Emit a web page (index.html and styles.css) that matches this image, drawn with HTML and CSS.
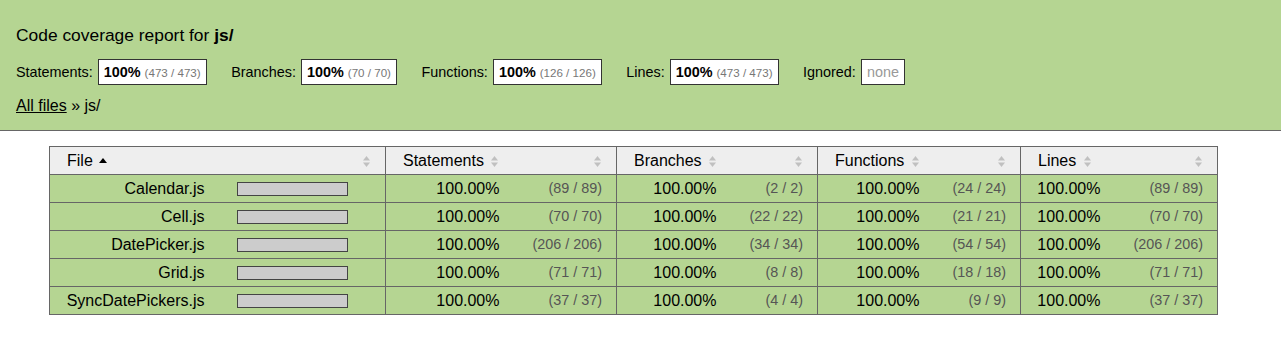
FILE: index.html
```html
<!DOCTYPE html>
<html>
<head>
<meta charset="utf-8">
<title>Code coverage report for js/</title>
<link rel="stylesheet" href="styles.css">
</head>
<body>
<div class="header high">
  <h1 class="title">Code coverage report for <span class="strong">js/</span></h1>
  <div class="stats">
    <div class="stat"><span class="label">Statements:</span><span class="box"><span class="strong">100%</span> <span class="frac">(473 / 473)</span></span></div>
    <div class="stat"><span class="label">Branches:</span><span class="box"><span class="strong">100%</span> <span class="frac">(70 / 70)</span></span></div>
    <div class="stat"><span class="label">Functions:</span><span class="box"><span class="strong">100%</span> <span class="frac">(126 / 126)</span></span></div>
    <div class="stat"><span class="label">Lines:</span><span class="box"><span class="strong">100%</span> <span class="frac">(473 / 473)</span></span></div>
    <div class="stat"><span class="label">Ignored:</span><span class="box"><span class="none">none</span></span></div>
  </div>
  <div class="path"><a href="#">All files</a> » js/</div>
</div>

<div class="body">
<table class="summary">
  <colgroup>
    <col class="c-name"><col class="c-bar">
    <col class="c-spct"><col class="c-sabs">
    <col class="c-bpct"><col class="c-babs">
    <col class="c-fpct"><col class="c-fabs">
    <col class="c-lpct"><col class="c-labs">
  </colgroup>
  <thead>
    <tr>
      <th class="th-lab g-start">File <svg class="asc" width="8" height="5" viewBox="0 0 8 5"><polygon points="0,5 8,5 4,0" fill="#000"/></svg></th>
      <th class="th-sort"><svg class="sorter" width="7" height="11" viewBox="0 0 7 11"><polygon points="0,4.5 7,4.5 3.5,0" fill="#c0c0c0"/><polygon points="0,6.5 7,6.5 3.5,11" fill="#c0c0c0"/></svg></th>
      <th class="th-lab g-start">Statements <svg class="sorter" width="7" height="11" viewBox="0 0 7 11"><polygon points="0,4.5 7,4.5 3.5,0" fill="#c0c0c0"/><polygon points="0,6.5 7,6.5 3.5,11" fill="#c0c0c0"/></svg></th>
      <th class="th-sort"><svg class="sorter" width="7" height="11" viewBox="0 0 7 11"><polygon points="0,4.5 7,4.5 3.5,0" fill="#c0c0c0"/><polygon points="0,6.5 7,6.5 3.5,11" fill="#c0c0c0"/></svg></th>
      <th class="th-lab g-start">Branches <svg class="sorter" width="7" height="11" viewBox="0 0 7 11"><polygon points="0,4.5 7,4.5 3.5,0" fill="#c0c0c0"/><polygon points="0,6.5 7,6.5 3.5,11" fill="#c0c0c0"/></svg></th>
      <th class="th-sort"><svg class="sorter" width="7" height="11" viewBox="0 0 7 11"><polygon points="0,4.5 7,4.5 3.5,0" fill="#c0c0c0"/><polygon points="0,6.5 7,6.5 3.5,11" fill="#c0c0c0"/></svg></th>
      <th class="th-lab g-start">Functions <svg class="sorter" width="7" height="11" viewBox="0 0 7 11"><polygon points="0,4.5 7,4.5 3.5,0" fill="#c0c0c0"/><polygon points="0,6.5 7,6.5 3.5,11" fill="#c0c0c0"/></svg></th>
      <th class="th-sort"><svg class="sorter" width="7" height="11" viewBox="0 0 7 11"><polygon points="0,4.5 7,4.5 3.5,0" fill="#c0c0c0"/><polygon points="0,6.5 7,6.5 3.5,11" fill="#c0c0c0"/></svg></th>
      <th class="th-lab g-start">Lines <svg class="sorter" width="7" height="11" viewBox="0 0 7 11"><polygon points="0,4.5 7,4.5 3.5,0" fill="#c0c0c0"/><polygon points="0,6.5 7,6.5 3.5,11" fill="#c0c0c0"/></svg></th>
      <th class="th-sort g-end"><svg class="sorter" width="7" height="11" viewBox="0 0 7 11"><polygon points="0,4.5 7,4.5 3.5,0" fill="#c0c0c0"/><polygon points="0,6.5 7,6.5 3.5,11" fill="#c0c0c0"/></svg></th>
    </tr>
  </thead>
  <tbody>
    <tr class="high">
      <td class="name g-start"><a href="#">Calendar.js</a></td>
      <td class="pic"><span class="bar"></span></td>
      <td class="pct g-start">100.00%</td><td class="abs">(89 / 89)</td>
      <td class="pct g-start">100.00%</td><td class="abs">(2 / 2)</td>
      <td class="pct g-start">100.00%</td><td class="abs">(24 / 24)</td>
      <td class="pct g-start">100.00%</td><td class="abs g-end">(89 / 89)</td>
    </tr>
    <tr class="high">
      <td class="name g-start"><a href="#">Cell.js</a></td>
      <td class="pic"><span class="bar"></span></td>
      <td class="pct g-start">100.00%</td><td class="abs">(70 / 70)</td>
      <td class="pct g-start">100.00%</td><td class="abs">(22 / 22)</td>
      <td class="pct g-start">100.00%</td><td class="abs">(21 / 21)</td>
      <td class="pct g-start">100.00%</td><td class="abs g-end">(70 / 70)</td>
    </tr>
    <tr class="high">
      <td class="name g-start"><a href="#">DatePicker.js</a></td>
      <td class="pic"><span class="bar"></span></td>
      <td class="pct g-start">100.00%</td><td class="abs">(206 / 206)</td>
      <td class="pct g-start">100.00%</td><td class="abs">(34 / 34)</td>
      <td class="pct g-start">100.00%</td><td class="abs">(54 / 54)</td>
      <td class="pct g-start">100.00%</td><td class="abs g-end">(206 / 206)</td>
    </tr>
    <tr class="high">
      <td class="name g-start"><a href="#">Grid.js</a></td>
      <td class="pic"><span class="bar"></span></td>
      <td class="pct g-start">100.00%</td><td class="abs">(71 / 71)</td>
      <td class="pct g-start">100.00%</td><td class="abs">(8 / 8)</td>
      <td class="pct g-start">100.00%</td><td class="abs">(18 / 18)</td>
      <td class="pct g-start">100.00%</td><td class="abs g-end">(71 / 71)</td>
    </tr>
    <tr class="high">
      <td class="name g-start"><a href="#">SyncDatePickers.js</a></td>
      <td class="pic"><span class="bar"></span></td>
      <td class="pct g-start">100.00%</td><td class="abs">(37 / 37)</td>
      <td class="pct g-start">100.00%</td><td class="abs">(4 / 4)</td>
      <td class="pct g-start">100.00%</td><td class="abs">(9 / 9)</td>
      <td class="pct g-start">100.00%</td><td class="abs g-end">(37 / 37)</td>
    </tr>
  </tbody>
</table>
</div>
</body>
</html>
```

FILE: styles.css
```css
html, body {
  margin: 0;
  padding: 0;
}
body {
  font-family: "Liberation Sans", Arial, Helvetica, sans-serif;
  font-size: 16px;
  color: #000;
  background: #fff;
}
.high {
  background: #b5d592;
}
.header {
  padding: 25px 16px 15px;
  border-bottom: 1px solid #666;
  display: flex;
  flex-direction: column;
}
.title {
  margin: 0;
  font-size: 17.4px;
  font-weight: normal;
  line-height: 20px;
}
.strong {
  font-weight: bold;
}
.stats {
  margin-top: 14px;
  display: flex;
  gap: 24.5px;
  font-size: 14.4px;
  height: 26px;
  align-items: center;
}
.stat {
  display: flex;
  align-items: center;
  gap: 5px;
}
.box {
  display: inline-block;
  background: #fff;
  border: 1px solid #333;
  padding: 0 5px;
  height: 24px;
  line-height: 24px;
  white-space: nowrap;
}
.frac {
  font-size: 11.6px;
  color: #777;
}
.none {
  color: #999;
}
.path {
  margin-top: 12px;
  line-height: 18px;
}
.path a {
  color: #000;
  text-decoration: underline;
}
.body {
  padding: 15px 0 0 49px;
}
table.summary {
  border-collapse: collapse;
  table-layout: fixed;
  width: 1169px;
}
.c-name { width: 172px; }
.c-bar { width: 164px; }
.c-spct { width: 125px; }
.c-sabs { width: 106px; }
.c-bpct { width: 111px; }
.c-babs { width: 90px; }
.c-fpct { width: 113px; }
.c-fabs { width: 90px; }
.c-lpct { width: 91px; }
.c-labs { width: 106px; }

.summary th, .summary td {
  border-top: 1px solid #666;
  border-bottom: 1px solid #666;
  padding: 4px 0;
  line-height: 19px;
  white-space: nowrap;
}
.summary th {
  background: #eee;
  font-weight: normal;
}
.summary .g-start { border-left: 1px solid #666; }
.summary .g-end { border-right: 1px solid #666; }
.th-lab {
  text-align: left;
  padding-left: 17px !important;
}
.th-sort {
  text-align: right;
  padding-right: 15px !important;
}
.sorter {
  vertical-align: -1px;
  margin-left: 3px;
}
.th-sort .sorter { margin-left: 0; }
.asc {
  vertical-align: 3px;
  margin-left: 2px;
}
.name {
  text-align: right;
  padding-right: 17px !important;
}
.name a {
  color: #000;
  text-decoration: none;
}
.pic {
  padding-left: 15px !important;
}
.bar {
  display: block;
  width: 109px;
  height: 12px;
  background: #ccc;
  border: 1px solid #444;
}
.pct {
  text-align: right;
  padding-right: 11px !important;
}
.abs {
  text-align: right;
  padding-right: 14px !important;
  font-size: 14.4px;
  color: #555;
}
```
